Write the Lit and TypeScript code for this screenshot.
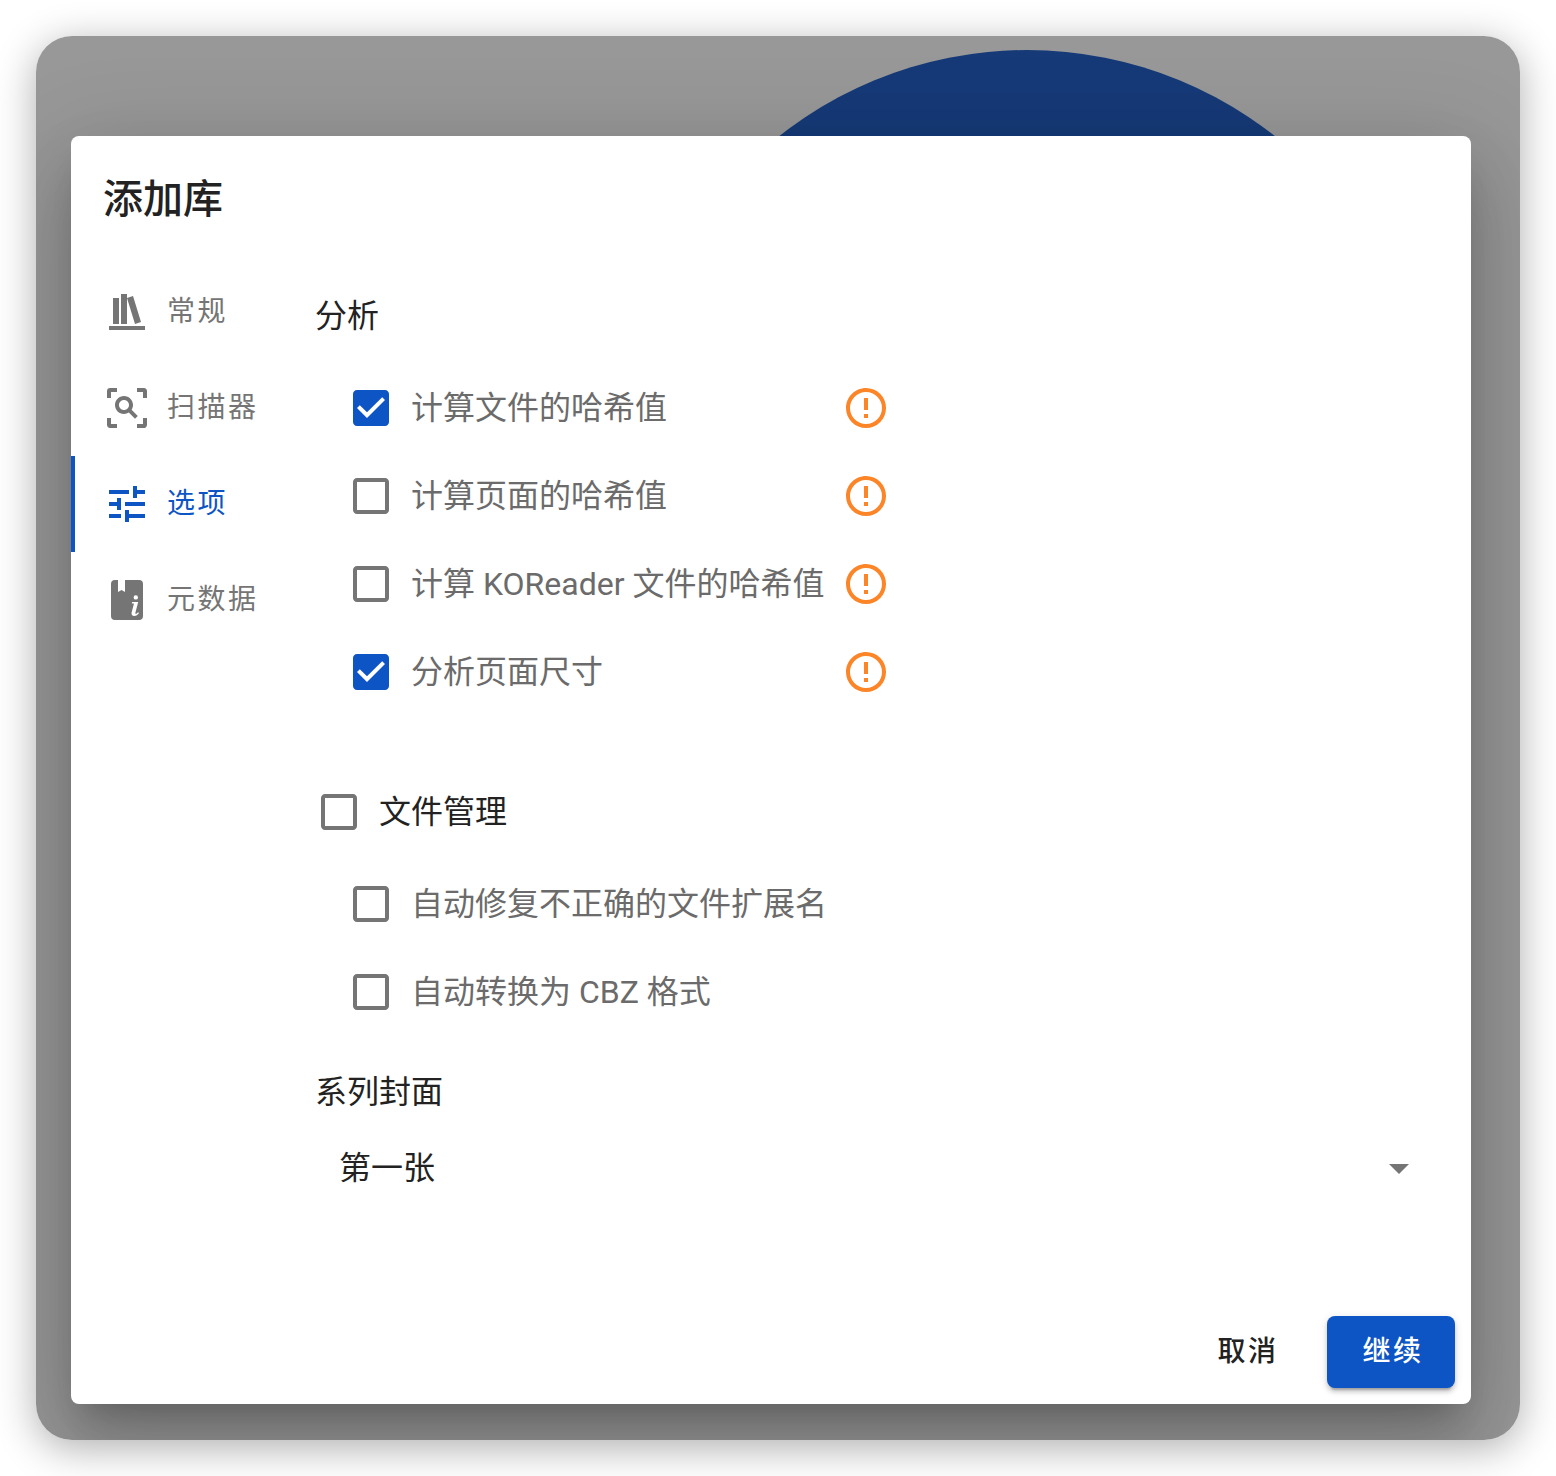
import { LitElement, css, html } from "lit";
import { customElement } from "lit/decorators.js";
import { classMap } from "lit/directives/class-map.js";

const ICONS: Record<string, string> = {
  shelf: "M9 3V18H12V3H9M12 5L16 18L19 17L15 4L12 5M5 5V18H8V5H5M3 19V21H21V19H3Z",
  scan: "M17 22V20H20V17H22V20.5C22 20.9 21.8 21.2 21.6 21.5C21.3 21.8 21 22 20.5 22H17M7 22H3.5C3.1 22 2.7 21.8 2.4 21.5C2.2 21.2 2 20.9 2 20.5V17H4V20H7V22M17 2H20.5C20.9 2 21.2 2.2 21.5 2.4C21.8 2.7 22 3.1 22 3.5V7H20V4H17V2M7 2V4H4V7H2V3.5C2 3.1 2.2 2.7 2.4 2.4C2.7 2.1 3.1 2 3.5 2H7M10.5 6C13 6 15 8 15 10.5C15 11.4 14.7 12.2 14.3 12.9L17.4 16L16 17.4L12.9 14.3C12.2 14.7 11.4 15 10.5 15C8 15 6 13 6 10.5S8 6 10.5 6M10.5 8C9.1 8 8 9.1 8 10.5S9.1 13 10.5 13 13 11.9 13 10.5 11.9 8 10.5 8Z",
  tune: "M3 17v2h6v-2H3zM3 5v2h10V5H3zm10 16v-2h8v-2h-8v-2h-2v6h2zM7 9v2H3v2h4v2h2V9H7zm14 4v-2H11v2h10zm-6-4h2V7h4V5h-4V3h-2v6z",
  book: "M6 2H7.5V8L9.25 7L11 8V2H18A2 2 0 0 1 20 4V20A2 2 0 0 1 18 22H6A2 2 0 0 1 4 20V4A2 2 0 0 1 6 2ZM16.4 9.6A1.1 1.1 0 1 0 16.4 11.8A1.1 1.1 0 1 0 16.4 9.6ZM14.6 13L14.4 13.7H15.5L14.3 18.3C14.1 19.3 14.6 20 15.6 20C16.6 20 17.4 19.4 18 18.5L17.5 18.1C17.1 18.6 16.7 18.9 16.4 18.9C16.2 18.9 16.1 18.7 16.2 18.4L17.6 13Z",
  blank: "M19 5v14H5V5h14m0-2H5c-1.1 0-2 .9-2 2v14c0 1.1.9 2 2 2h14c1.1 0 2-.9 2-2V5c0-1.1-.9-2-2-2z",
  checked: "M19 3H5c-1.11 0-2 .9-2 2v14c0 1.1.89 2 2 2h14c1.11 0 2-.9 2-2V5c0-1.11-.89-2-2-2zm-9 14l-5-5 1.41-1.41L10 14.17l7.59-7.59L19 8l-9 9z",
  alert: "M11,15H13V17H11V15M11,7H13V13H11V7M12,2C6.47,2 2,6.5 2,12A10,10 0 0,0 12,22A10,10 0 0,0 22,12A10,10 0 0,0 12,2M12,20A8,8 0 0,1 4,12A8,8 0 0,1 12,4A8,8 0 0,1 20,12A8,8 0 0,1 12,20Z",
  caret: "M7,10L12,15L17,10H7Z",
};

const TABS = [
  { icon: "shelf", label: "常规" },
  { icon: "scan", label: "扫描器" },
  { icon: "tune", label: "选项", active: true },
  { icon: "book", label: "元数据" },
];

const ANALYSIS = [
  { label: "计算文件的哈希值", on: true },
  { label: "计算页面的哈希值", on: false },
  { label: "计算 KOReader 文件的哈希值", on: false },
  { label: "分析页面尺寸", on: true },
];

const FILE_MANAGEMENT = ["自动修复不正确的文件扩展名", "自动转换为 CBZ 格式"];

@customElement("app-root")
export class AppRoot extends LitElement {
  static styles = css`
    :host {
      display: block;
      padding: 36px;
      font-family: Roboto, "Noto Sans CJK SC", sans-serif;
      color: #222;
    }
    .frame {
      border-radius: 36px;
      box-shadow: 0 8px 40px rgba(0, 0, 0, 0.32);
    }
    .window {
      position: relative;
      height: 1404px;
      box-sizing: border-box;
      padding: 100px 49px 36px 35px;
      overflow: hidden;
      border-radius: 36px;
      background: #989898;
    }
    .circle {
      position: absolute;
      top: 14px;
      left: 591px;
      width: 800px;
      height: 800px;
      border-radius: 50%;
      background: #163a78;
    }
    .dialog {
      position: relative;
      display: flex;
      flex-direction: column;
      height: 100%;
      border-radius: 8px;
      background: #fff;
      box-shadow: 0 22px 30px -14px rgba(0, 0, 0, 0.2),
        0 48px 76px 6px rgba(0, 0, 0, 0.14),
        0 18px 92px 16px rgba(0, 0, 0, 0.12);
    }
    .title {
      display: flex;
      align-items: center;
      height: 128px;
      padding-left: 32px;
      font-size: 40px;
      font-weight: 500;
      line-height: 64px;
    }
    .body {
      display: flex;
      flex: 1;
    }
    .tabs {
      width: 244px;
      flex: none;
    }
    .tab {
      display: flex;
      align-items: center;
      gap: 16px;
      height: 96px;
      box-sizing: border-box;
      padding-left: 32px;
      color: #757575;
      font-size: 28px;
      line-height: 40px;
      letter-spacing: 2.5px;
    }
    .tab.active {
      border-left: 4px solid #0d54c5;
      padding-left: 28px;
      color: #0d54c5;
    }
    svg {
      display: block;
      flex: none;
      width: 48px;
      height: 48px;
      fill: currentColor;
    }
    .content {
      flex: 1;
      padding: 28px 48px 0 0;
    }
    .heading {
      height: 48px;
      font-size: 32px;
      line-height: 48px;
    }
    .group {
      margin-top: 24px;
    }
    .row {
      display: flex;
      align-items: center;
      gap: 16px;
      height: 88px;
      font-size: 32px;
      line-height: 48px;
    }
    .row.nested {
      padding-left: 32px;
      color: #6b6b6b;
    }
    .row .box {
      margin: 0 0.5px 0 -0.5px;
      color: #757575;
    }
    .row .box.on {
      color: #0d54c5;
    }
    .row.warned .text {
      width: 415px;
      white-space: nowrap;
    }
    .alert {
      color: #fb8527;
    }
    .parent {
      margin-top: 52px;
      margin-bottom: 4px;
    }
    .covers {
      margin-top: 32px;
    }
    .select {
      display: flex;
      align-items: center;
      justify-content: space-between;
      height: 64px;
      margin-top: 20px;
      padding-left: 24px;
      font-size: 32px;
      line-height: 48px;
    }
    .select svg {
      color: #757575;
    }
    .actions {
      display: flex;
      justify-content: flex-end;
      align-items: center;
      gap: 17px;
      padding: 0 16px 16px 0;
    }
    .btn {
      height: 72px;
      min-width: 128px;
      box-sizing: border-box;
      padding: 0 30px 0 34px;
      border: 0;
      border-radius: 8px;
      background: none;
      color: #222;
      font: 500 28px/40px Roboto, "Noto Sans CJK SC", sans-serif;
      letter-spacing: 2.5px;
    }
    .btn.primary {
      background: #0d54c5;
      color: #fff;
      box-shadow: 0 6px 2px -4px rgba(0, 0, 0, 0.2),
        0 4px 4px 0 rgba(0, 0, 0, 0.14), 0 2px 10px 0 rgba(0, 0, 0, 0.12);
    }
  `;

  private icon(name: string, cls = "") {
    return html`<svg class=${cls} viewBox="0 0 24 24"><path fill-rule="evenodd" d=${ICONS[name]}></path></svg>`;
  }

  private box(on: boolean) {
    return this.icon(on ? "checked" : "blank", on ? "box on" : "box");
  }

  render() {
    return html`
      <div class="frame">
        <div class="window">
          <div class="circle"></div>
          <div class="dialog">
            <div class="title">添加库</div>
            <div class="body">
              <div class="tabs">
                ${TABS.map(
                  (t) => html`<div class=${classMap({ tab: true, active: !!t.active })}>
                    ${this.icon(t.icon)}<span>${t.label}</span>
                  </div>`
                )}
              </div>
              <div class="content">
                <div class="heading">分析</div>
                <div class="group">
                  ${ANALYSIS.map(
                    (r) => html`<div class="row nested warned">
                      ${this.box(r.on)}
                      <span class="text">${r.label}</span>
                      ${this.icon("alert", "alert")}
                    </div>`
                  )}
                </div>
                <div class="row parent">${this.box(false)}<span>文件管理</span></div>
                ${FILE_MANAGEMENT.map(
                  (label) => html`<div class="row nested">${this.box(false)}<span>${label}</span></div>`
                )}
                <div class="heading covers">系列封面</div>
                <div class="select"><span>第一张</span>${this.icon("caret")}</div>
              </div>
            </div>
            <div class="actions">
              <button class="btn">取消</button>
              <button class="btn primary">继续</button>
            </div>
          </div>
        </div>
      </div>
    `;
  }
}
